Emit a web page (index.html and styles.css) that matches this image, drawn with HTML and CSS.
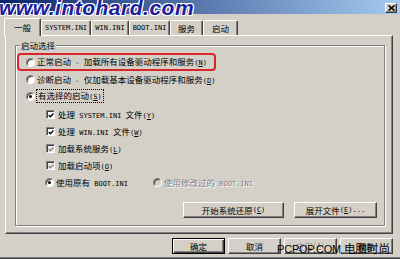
FILE: index.html
```html
<!DOCTYPE html>
<html lang="zh-CN">
<head>
<meta charset="utf-8">
<title>系统配置实用程序</title>
<link rel="stylesheet" href="styles.css">
</head>
<body>
<div class="win">
  <div class="titlebar">
    <span class="close"><svg width="7" height="6" viewBox="0 0 7 6"><path d="M0.5 0.5L6.5 5.5M6.5 0.5L0.5 5.5" stroke="#000" stroke-width="1.6"/></svg></span>
  </div>
  <div class="tabs">
    <div class="tab sel t1">一般</div>
    <div class="tab t2"><span class="a">SYSTEM.INI</span></div>
    <div class="tab t3"><span class="a">WIN.INI</span></div>
    <div class="tab t4"><span class="a">BOOT.INI</span></div>
    <div class="tab t5">服务</div>
    <div class="tab t6">启动</div>
  </div>
  <div class="panel">
    <div class="group">
      <span class="legend">启动选择</span>
      <div class="row r1"><span class="radio"></span><span class="lbl">正常启动<span class="a"> - </span>加载所有设备驱动程序和服务<span class="a">(<u>N</u>)</span></span></div>
      <div class="row r2"><span class="radio"></span><span class="lbl">诊断启动<span class="a"> - </span>仅加载基本设备驱动程序和服务<span class="a">(<u>D</u>)</span></span></div>
      <div class="row r3"><span class="radio on"></span><span class="lbl focus">有选择的启动<span class="a">(<u>S</u>)</span></span></div>
      <div class="row sub c1"><span class="check"><svg width="7" height="7" viewBox="0 0 7 7"><polyline points="0.8,3 2.8,5 6.4,1.2" fill="none" stroke="#000" stroke-width="1.5"/></svg></span><span class="lbl">处理<span class="a"> SYSTEM.INI </span>文件<span class="a">(<u>Y</u>)</span></span></div>
      <div class="row sub"><span class="check"><svg width="7" height="7" viewBox="0 0 7 7"><polyline points="0.8,3 2.8,5 6.4,1.2" fill="none" stroke="#000" stroke-width="1.5"/></svg></span><span class="lbl">处理<span class="a"> WIN.INI </span>文件<span class="a">(<u>W</u>)</span></span></div>
      <div class="row sub"><span class="check grey"><svg width="7" height="7" viewBox="0 0 7 7"><polyline points="0.8,3 2.8,5 6.4,1.2" fill="none" stroke="#8a8a8a" stroke-width="1.5"/></svg></span><span class="lbl">加载系统服务<span class="a">(<u>L</u>)</span></span></div>
      <div class="row sub"><span class="check grey"><svg width="7" height="7" viewBox="0 0 7 7"><polyline points="0.8,3 2.8,5 6.4,1.2" fill="none" stroke="#8a8a8a" stroke-width="1.5"/></svg></span><span class="lbl">加载启动项<span class="a">(<u>O</u>)</span></span></div>
      <div class="row sub boot">
        <span class="opt1"><span class="radio on"></span><span class="lbl">使用原有<span class="a"> BOOT.INI</span></span></span>
        <span class="opt2"><span class="radio dis"></span><span class="lbl disabled">使用修改过的<span class="a"> BOOT.INI</span></span></span>
      </div>
      <div class="gbtns">
        <span class="btn b1">开始系统还原<span class="a">(<u>C</u>)</span></span>
        <span class="btn b2">展开文件<span class="a">(<u>E</u>)...</span></span>
      </div>
    </div>
  </div>
  <div class="footer">
    <span class="btn fb def">确定</span>
    <span class="btn fb">取消</span>
    <span class="btn fb disabled">应用<span class="a">(<u>A</u>)</span></span>
    <span class="btn fb">帮助</span>
  </div>
  <div class="wm-top">www.intohard.com</div>
  <div class="wm-bottom"><span class="wl">PCPOP.COM</span><span class="wc">电脑时尚</span></div>
</div>
</body>
</html>
```
FILE: styles.css
```css
body {
  margin: 0;
  background: #d4d0c8;
  font-family: "Noto Sans CJK SC", sans-serif;
  font-size: 8.5px;
  color: #000;
}
.win {
  position: relative;
  width: 400px;
  height: 259px;
  overflow: hidden;
  box-sizing: border-box;
  border-bottom: 1px solid #404040;
  box-shadow: inset 0 -1px 0 #808080;
  display: flex;
  flex-direction: column;
}
.a {
  font-family: "DejaVu Sans Mono", monospace;
  font-size: 7px;
}
u { text-decoration: underline; text-underline-offset: 1px; }

.titlebar {
  height: 14px;
  flex: none;
  background: linear-gradient(to right, #0a246a, #a6caf0);
  display: flex;
  justify-content: flex-end;
  align-items: flex-start;
  padding: 3px 3px 0 0;
  box-sizing: border-box;
}
.close {
  width: 12px;
  height: 10px;
  box-sizing: border-box;
  background: #d4d0c8;
  border: 1px solid;
  border-color: #fff #404040 #404040 #fff;
  box-shadow: inset -1px -1px 0 #808080;
  display: flex;
  align-items: center;
  justify-content: center;
}
.close svg { display: block; }

.tabs {
  flex: none;
  height: 17px;
  margin-top: 4px;
  padding-left: 4px;
  display: flex;
  align-items: flex-end;
}
.tab {
  height: 15px;
  box-sizing: border-box;
  border-top: 1px solid #fff;
  border-left: 1px solid #fff;
  border-right: 1px solid #404040;
  box-shadow: inset -1px 0 0 #808080;
  border-radius: 2px 2px 0 0;
  display: flex;
  align-items: center;
  justify-content: center;
  line-height: 1;
  padding-top: 1px;
}
.tab.sel {
  position: relative;
  z-index: 2;
  height: 18px;
  margin-bottom: -1px;
  background: #d4d0c8;
  padding-top: 0;
  padding-bottom: 1px;
}
.t1 { width: 37px; }
.t2 { width: 50px; }
.t3 { width: 38px; }
.t4 { width: 41px; }
.t5 { width: 33px; }
.t6 { width: 35px; }

.panel {
  flex: none;
  margin-left: 5px;
  width: 388px;
  height: 199px;
  box-sizing: border-box;
  border: 1px solid;
  border-color: #fff #404040 #404040 #fff;
  box-shadow: inset -1px -1px 0 #808080;
  padding: 9px 0 0 9px;
}
.group {
  position: relative;
  width: 370px;
  height: 181px;
  box-sizing: border-box;
  border: 1px solid #808080;
  box-shadow: inset 1px 1px 0 #fff, 1px 1px 0 #fff;
  padding-top: 7px;
  display: flex;
  flex-direction: column;
}
.legend {
  position: absolute;
  left: 4px;
  top: -6px;
  height: 11px;
  line-height: 11px;
  padding: 0 1px;
  background: #d4d0c8;
}
.row {
  display: flex;
  align-items: center;
  height: 17px;
  box-sizing: border-box;
  padding-left: 10px;
  line-height: 1;
}
.r1 {
  margin-left: 1px;
  width: 199px;
  height: 18px;
  border: 2px solid #d8262a;
  border-radius: 4px;
  padding-left: 7px;
}
.r3 { height: 16px; }
.sub { padding-left: 30px; }
.c1 { margin-top: 2px; }

.radio {
  flex: none;
  position: relative;
  width: 9px;
  height: 9px;
  box-sizing: border-box;
  border-radius: 50%;
  background: #fff;
  border: 1px solid;
  border-color: #808080 #fff #fff #808080;
  box-shadow: inset 1px 1px 0 #404040;
  margin-right: 2px;
}
.radio.on::after {
  content: "";
  position: absolute;
  left: 2px;
  top: 2px;
  width: 3px;
  height: 3px;
  border-radius: 50%;
  background: #000;
}
.radio.dis { background: #d4d0c8; }
.check {
  flex: none;
  width: 9px;
  height: 9px;
  box-sizing: border-box;
  background: #fff;
  border: 1px solid;
  border-color: #808080 #fff #fff #808080;
  box-shadow: inset 1px 1px 0 #404040;
  margin-right: 3px;
  display: flex;
  align-items: center;
  justify-content: center;
}
.check svg { display: block; margin: 1px 0 0 1px; }
.check.grey { background: #ecebe6; }
.lbl { white-space: nowrap; }
.focus {
  outline: 1px dotted #000;
  outline-offset: 0;
  padding: 1px 1px;
}
.boot { padding-left: 29px; }
.opt1 { width: 108px; display: flex; align-items: center; }
.opt2 { display: flex; align-items: center; }
.disabled {
  color: #808080;
  text-shadow: 1px 1px 0 #fff;
}
.disabled .a { color: #808080; }

.gbtns {
  margin-top: 11px;
  display: flex;
  justify-content: flex-end;
  gap: 10px;
  padding-right: 7px;
}
.btn {
  height: 16px;
  box-sizing: border-box;
  border: 1px solid;
  border-color: #fff #404040 #404040 #fff;
  box-shadow: inset -1px -1px 0 #808080;
  display: flex;
  align-items: center;
  justify-content: center;
  line-height: 1;
  white-space: nowrap;
}
.b1 { width: 101px; }
.b2 { width: 83px; }

.footer {
  flex: none;
  margin-top: 4px;
  display: flex;
  justify-content: flex-end;
  gap: 3px;
  padding-right: 7px;
}
.fb { width: 53px; }
.def {
  border: 1px solid #000;
  box-shadow: inset 1px 1px 0 #fff, inset -1px -1px 0 #404040, inset -2px -2px 0 #808080;
}

.wm-top {
  position: absolute;
  left: -1px;
  top: -3px;
  font-family: "Liberation Sans", Arial, sans-serif;
  font-weight: bold;
  font-style: italic;
  font-size: 21px;
  line-height: 21px;
  letter-spacing: 0.5px;
  color: #1e1e9c;
  text-shadow: 1px 0 0 #fff, -1px 0 0 #fff, 0 1px 0 #fff, 0 -1px 0 #fff, 1px 1px 0 #fff, -1px -1px 0 #fff, 1px -1px 0 #fff, -1px 1px 0 #fff;
  z-index: 5;
}
.wm-bottom {
  position: absolute;
  left: 277px;
  top: 242px;
  display: flex;
  align-items: baseline;
  gap: 3px;
  line-height: 12px;
  color: #000;
  white-space: nowrap;
  z-index: 5;
}
.wl {
  font-family: "Liberation Sans", Arial, sans-serif;
  font-size: 11px;
  letter-spacing: -0.2px;
}
.wc {
  font-family: "Noto Sans CJK SC", sans-serif;
  font-size: 11.5px;
}
```
